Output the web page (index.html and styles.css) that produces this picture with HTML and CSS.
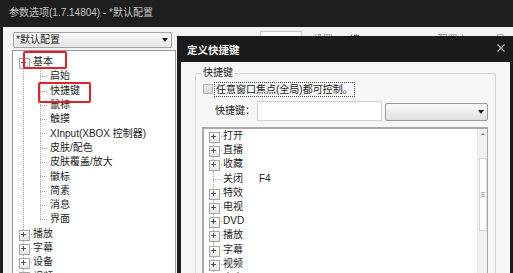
FILE: index.html
```html
<!DOCTYPE html>
<html>
<head>
<meta charset="utf-8">
<link rel="stylesheet" href="styles.css">
</head>
<body>
<div class="app">
  <div class="titlebar">参数选项(1.7.14804) - *默认配置</div>
  <div class="main">
    <div class="sidebar">
      <div class="combo">*默认配置<span class="arrow"></span></div>
      <div class="tree">
        <div class="row"><span class="c box minus first"></span><span class="txt">基本</span></div>
        <div class="row"><span class="c v"></span><span class="c t"></span><span class="txt">启始</span></div>
        <div class="row"><span class="c v"></span><span class="c t"></span><span class="txt">快捷键</span></div>
        <div class="row"><span class="c v"></span><span class="c t"></span><span class="txt">鼠标</span></div>
        <div class="row"><span class="c v"></span><span class="c t"></span><span class="txt">触摸</span></div>
        <div class="row"><span class="c v"></span><span class="c t"></span><span class="txt">XInput(XBOX 控制器)</span></div>
        <div class="row"><span class="c v"></span><span class="c t"></span><span class="txt">皮肤/配色</span></div>
        <div class="row"><span class="c v"></span><span class="c t"></span><span class="txt">皮肤覆盖/放大</span></div>
        <div class="row"><span class="c v"></span><span class="c t"></span><span class="txt">徽标</span></div>
        <div class="row"><span class="c v"></span><span class="c t"></span><span class="txt">简素</span></div>
        <div class="row"><span class="c v"></span><span class="c t"></span><span class="txt">消息</span></div>
        <div class="row"><span class="c v"></span><span class="c l"></span><span class="txt">界面</span></div>
        <div class="row"><span class="c box"></span><span class="txt">播放</span></div>
        <div class="row"><span class="c box"></span><span class="txt">字幕</span></div>
        <div class="row"><span class="c box"></span><span class="txt">设备</span></div>
        <div class="row"><span class="c box"></span><span class="txt">视频</span></div>
      </div>
    </div>
    <div class="content">
      <span class="ghost-box"></span>
      <span class="ghost g1">设置项</span>
      <span class="ghost g2">选项</span>
      <span class="ghost g3">配置文件</span>
      <span class="ghost g4">显示</span>
    </div>
  </div>
</div>

<span class="mark mark1"></span>
<span class="mark mark2"></span>

<div class="dialog">
  <div class="dlg-title">
    <span>定义快捷键</span>
    <svg class="close" width="8" height="8" viewBox="0 0 8 8"><path d="M0.5 0.5L7.5 7.5M7.5 0.5L0.5 7.5" stroke="#b8b8b8" stroke-width="1.3"/></svg>
  </div>
  <div class="dlg-body">
    <fieldset class="group">
      <legend>快捷键</legend>
      <div class="check-row">
        <span class="checkbox"></span>
        <span class="focus">任意窗口焦点(全局)都可控制。</span>
      </div>
      <div class="key-row">
        <span class="key-label">快捷键：</span>
        <span class="input"></span>
        <span class="combo2"><span class="arrow"></span></span>
      </div>
      <div class="tree2">
        <div class="rows">
          <div class="row"><span class="c box first"></span><span class="txt">打开</span></div>
          <div class="row"><span class="c box"></span><span class="txt">直播</span></div>
          <div class="row"><span class="c box"></span><span class="txt">收藏</span></div>
          <div class="row"><span class="c t"></span><span class="txt name">关闭</span><span class="txt">F4</span></div>
          <div class="row"><span class="c box"></span><span class="txt">特效</span></div>
          <div class="row"><span class="c box"></span><span class="txt">电视</span></div>
          <div class="row"><span class="c box"></span><span class="txt">DVD</span></div>
          <div class="row"><span class="c box"></span><span class="txt">播放</span></div>
          <div class="row"><span class="c box"></span><span class="txt">字幕</span></div>
          <div class="row"><span class="c box"></span><span class="txt">视频</span></div>
          <div class="row"><span class="c box"></span><span class="txt">声音</span></div>
        </div>
        <div class="scrollbar">
          <span class="up"></span>
          <span class="thumb"><span class="grip"></span></span>
        </div>
      </div>
    </fieldset>
  </div>
</div>
</body>
</html>
```

FILE: styles.css
```css
* { box-sizing: border-box; margin: 0; padding: 0; }
html, body { width: 513px; height: 273px; overflow: hidden; }
body {
  background: #1c1c1c;
  font-family: "Liberation Sans", "Noto Sans CJK SC", sans-serif;
  font-size: 10px;
  color: #1e1e1e;
  position: relative;
}
.app { width: 513px; height: 273px; display: flex; flex-direction: column; }
.titlebar {
  height: 27px; flex: none; background: #1e1e1e; color: #c4c4c4;
  padding-left: 9px; line-height: 26px; font-size: 10px;
}
.main { flex: 1; display: flex; margin-left: 3px; background: #f3f3f3; min-height: 0; }
.sidebar { width: 174px; flex: none; padding: 5px 0 0 9px; display: flex; flex-direction: column; }

.combo {
  margin-left: 1px; width: 159px; height: 16px; flex: none;
  border: 1px solid #a4a4a4; border-radius: 2px;
  background: linear-gradient(#fbfbfb, #e4e4e4);
  display: flex; align-items: center; justify-content: space-between;
  padding: 0 3px 0 2px; line-height: 14px;
}
.arrow { width: 0; height: 0; border-left: 3px solid transparent; border-right: 3px solid transparent; border-top: 4px solid #1a1a1a; }

.tree {
  margin-top: 2px; width: 164px; flex: 1;
  border: 1px solid #9a9a9a; border-bottom: none;
  background: #fff; padding: 4px 0 0 2px; overflow: hidden;
}
.row { height: 14.3px; display: flex; align-items: center; white-space: nowrap; }
.txt { line-height: 14px; padding-left: 1px; }

.c { width: 17px; height: 100%; flex: none; position: relative; }
.c.v { background: repeating-linear-gradient(#a8a8a8 0 1px, transparent 1px 2px) 8px 0 / 1px 100% no-repeat; }
.c.t {
  background:
    repeating-linear-gradient(#a8a8a8 0 1px, transparent 1px 2px) 8px 0 / 1px 100% no-repeat,
    repeating-linear-gradient(90deg, #a8a8a8 0 1px, transparent 1px 2px) 8px 7px / 8px 1px no-repeat;
}
.c.l {
  background:
    repeating-linear-gradient(#a8a8a8 0 1px, transparent 1px 2px) 8px 0 / 1px 7px no-repeat,
    repeating-linear-gradient(90deg, #a8a8a8 0 1px, transparent 1px 2px) 8px 7px / 8px 1px no-repeat;
}
.c.box {
  background:
    repeating-linear-gradient(#a8a8a8 0 1px, transparent 1px 2px) 8px 0 / 1px 100% no-repeat,
    repeating-linear-gradient(90deg, #a8a8a8 0 1px, transparent 1px 2px) 12px 7px / 5px 1px no-repeat;
}
.c.box.first {
  background:
    repeating-linear-gradient(#a8a8a8 0 1px, transparent 1px 2px) 8px 8px / 1px 100% no-repeat,
    repeating-linear-gradient(90deg, #a8a8a8 0 1px, transparent 1px 2px) 12px 7px / 5px 1px no-repeat;
}
.c.box::before {
  content: ""; position: absolute; left: 4px; top: 3px; width: 9px; height: 9px;
  border: 1px solid #a6a6a6; background: linear-gradient(#ffffff, #e6e6e6);
}
.c.box::after {
  content: ""; position: absolute; left: 6px; top: 5px; width: 5px; height: 5px;
  background:
    linear-gradient(#505050, #505050) 0 2px / 5px 1px no-repeat,
    linear-gradient(#505050, #505050) 2px 0 / 1px 5px no-repeat;
}
.c.box.minus::after {
  background: linear-gradient(#505050, #505050) 0 2px / 5px 1px no-repeat;
}

.content { flex: 1; position: relative; display: flex; align-items: flex-start; padding-top: 6px; padding-left: 83px; overflow: hidden; }
.ghost-box { width: 42px; height: 14px; border: 1px solid #c8c8c8; background: #fff; flex: none; margin-top: -2px; }
.ghost { color: #8a8a8a; line-height: 14px; }
.g1 { margin-left: 11px; }
.g2 { margin-left: 10px; color: #5a5a8a; }
.g3 { margin-left: 70px; }
.g4 { margin-left: 22px; }

.mark { position: absolute; border: 2px solid #e0232a; border-radius: 2px; }
.mark1 { left: 23px; top: 51px; width: 44px; height: 18px; }
.mark2 { left: 38px; top: 82px; width: 53px; height: 21px; }

.dialog {
  position: absolute; left: 177px; top: 36px; width: 336px; height: 245px;
  display: flex; flex-direction: column; background: #1b1b1b;
}
.dlg-title {
  height: 26px; flex: none; display: flex; align-items: center; justify-content: space-between;
  padding: 0 8px 0 10px; color: #f2f2f2; font-size: 10.5px; font-weight: bold;
}
.close { margin-top: -2px; }
.dlg-body {
  flex: 1; margin: 0 3px 0 4px; background: #f6f6f6;
  padding: 5px 14px 0 14px; display: flex; flex-direction: column;
}
.group {
  border: 1px solid #d6d6d6; border-bottom: none; border-radius: 3px 3px 0 0;
  padding: 0 0 0 6px; flex: 1; min-width: 0;
  display: flex; flex-direction: column;
}
.group legend { margin-left: 0; padding: 0 1px; line-height: 12px; }
.check-row { display: flex; align-items: center; height: 14px; margin-top: 3px; }
.checkbox {
  width: 10px; height: 10px; margin-left: 1px; border: 1px solid #b4b4b4;
  background: linear-gradient(#e8e8e8, #d4d4d4); flex: none;
}
.focus {
  margin-left: 2px; outline: 1px dotted #555; outline-offset: 0; padding: 0 1px;
  line-height: 13px;
}
.key-row { display: flex; align-items: flex-start; margin-top: 5px; height: 20px; }
.key-label { width: 42px; margin-left: 13px; line-height: 20px; }
.input { width: 125px; height: 20px; border: 1px solid #d0d0d0; background: #fff; }
.combo2 {
  margin-left: 3px; margin-top: 2px; width: 103px; height: 18px;
  border: 1px solid #9c9c9c; border-radius: 2px;
  background: linear-gradient(#fafafa, #dedede);
  display: flex; align-items: center; justify-content: flex-end; padding-right: 3px;
}
.tree2 {
  margin-top: 6px; width: 286px; flex: 1;
  border: 2px solid #a8a8a8; border-right-width: 1px; border-bottom: none;
  background: #fff; display: flex; overflow: hidden;
}
.rows { flex: 1; padding: 0 0 0 1px; }
.tree2 .row { height: 14.2px; }
.tree2 .txt.name { width: 36px; }
.scrollbar {
  width: 10px; flex: none; background: #f0f0f0; border-left: 1px solid #e8e8e8;
  display: flex; flex-direction: column; align-items: center;
}
.up { margin-top: 4px; width: 0; height: 0; border-left: 2px solid transparent; border-right: 2px solid transparent; border-bottom: 2px solid #888; }
.thumb {
  margin-top: 23px; width: 8px; height: 73px; border: 1px solid #d8d8d8; background: #fdfdfd;
  display: flex; align-items: center; justify-content: center;
}
.grip { width: 4px; height: 5px; background: repeating-linear-gradient(#aaa 0 1px, transparent 1px 2px); }
```
